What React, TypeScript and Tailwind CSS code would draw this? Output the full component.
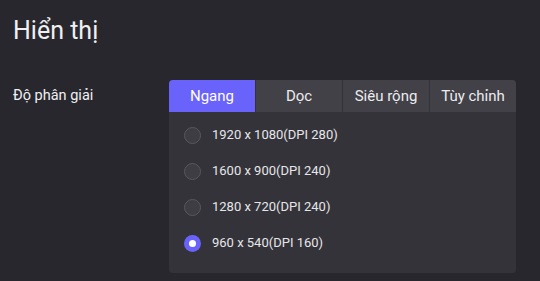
import { useState } from 'react';

const tabs = ['Ngang', 'Dọc', 'Siêu rộng', 'Tùy chỉnh'];

const resolutions = [
    '1920 x 1080(DPI 280)',
    '1600 x 900(DPI 240)',
    '1280 x 720(DPI 240)',
    '960 x 540(DPI 160)',
];

export default function App() {
    const [tab, setTab] = useState(0);
    const [selected, setSelected] = useState(3);

    return (
        <div
            className="h-[281px] w-[540px] overflow-hidden bg-[#28272e] text-[#f0f0f2]"
            style={{ fontFamily: 'Roboto, "Noto Sans", sans-serif' }}
        >
            <h1 className="pl-[13px] pt-[15px] text-[25px] leading-[32px] font-normal">Hiển thị</h1>
            <div className="mt-[33px] flex">
                <div className="w-[169px] pl-[13px] pt-[7px] text-[14.5px] leading-[18px]">Độ phân giải</div>
                <div className="w-[347px] overflow-hidden rounded-[4px] bg-[#343339]">
                    <div className="flex gap-px">
                        {tabs.map((label, i) => (
                            <button
                                key={label}
                                onClick={() => setTab(i)}
                                className={
                                    'h-[32px] flex-1 text-[15px] ' +
                                    (i === tab ? 'bg-[#6a63fb] text-white' : 'bg-[#424147] text-[#ececef]')
                                }
                            >
                                {label}
                            </button>
                        ))}
                    </div>
                    <div className="flex flex-col gap-[20px] pb-[22px] pl-[15px] pt-[15px]">
                        {resolutions.map((res, i) => (
                            <label key={res} className="flex h-[16px] cursor-pointer items-center gap-[11px]" onClick={() => setSelected(i)}>
                                {i === selected ? (
                                    <span className="flex h-[17px] w-[17px] items-center justify-center rounded-full bg-[#6a63fb]">
                                        <span className="h-[7px] w-[7px] rounded-full bg-white" />
                                    </span>
                                ) : (
                                    <span className="h-[17px] w-[17px] rounded-full border border-[#58575d] bg-[#3e3d43]" />
                                )}
                                <span className="text-[13px] text-[#e6e6ea]">{res}</span>
                            </label>
                        ))}
                    </div>
                </div>
            </div>
        </div>
    );
}
